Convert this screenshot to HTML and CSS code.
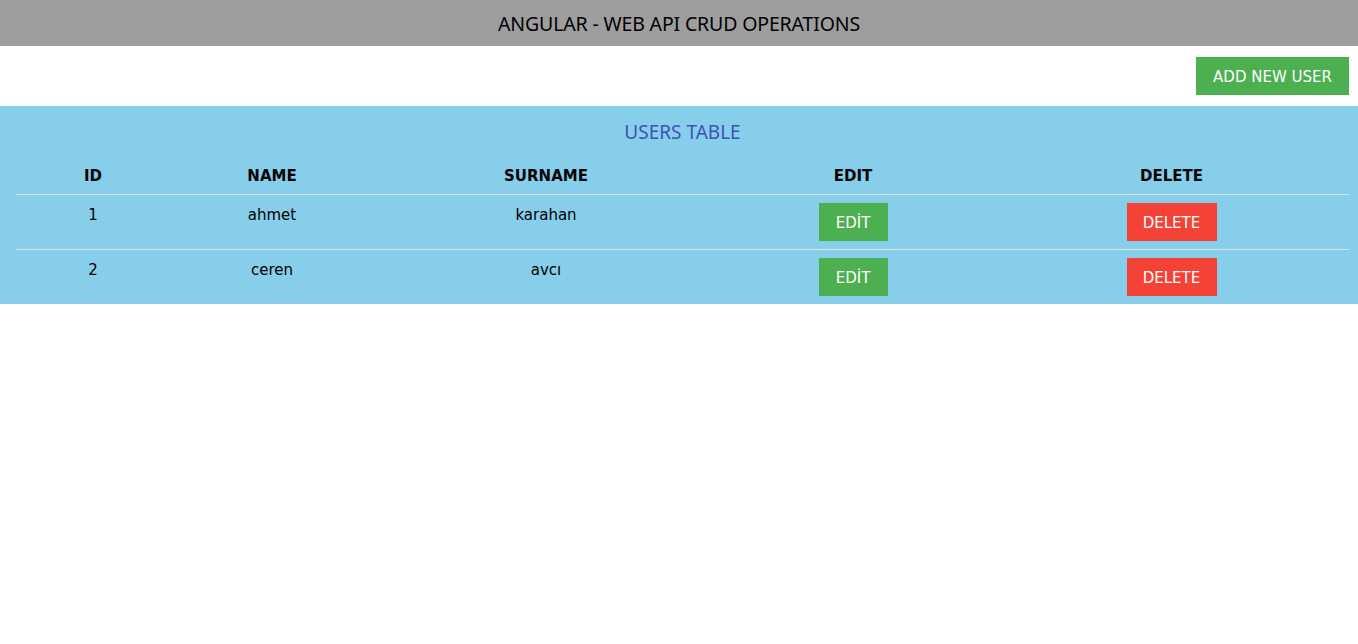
FILE: index.html
```html
<!DOCTYPE html>
<html>
<head>
<meta charset="utf-8">
<link rel="stylesheet" href="styles.css">
</head>
<body>
<header class="topbar">
  <h1 class="topbar-title">ANGULAR - WEB API CRUD OPERATIONS</h1>
</header>
<div class="actions">
  <button class="btn btn-green">ADD NEW USER</button>
</div>
<section class="panel">
  <h2 class="panel-title">USERS TABLE</h2>
  <table class="users">
    <colgroup>
      <col class="c-id"><col class="c-name"><col class="c-surname"><col class="c-edit"><col>
    </colgroup>
    <thead>
      <tr><th>ID</th><th>NAME</th><th>SURNAME</th><th>EDIT</th><th>DELETE</th></tr>
    </thead>
    <tbody>
      <tr>
        <td>1</td><td>ahmet</td><td>karahan</td>
        <td><button class="btn btn-green">EDİT</button></td>
        <td><button class="btn btn-red">DELETE</button></td>
      </tr>
      <tr>
        <td>2</td><td>ceren</td><td>avcı</td>
        <td><button class="btn btn-green">EDİT</button></td>
        <td><button class="btn btn-red">DELETE</button></td>
      </tr>
    </tbody>
  </table>
</section>
</body>
</html>
```
FILE: styles.css
```css
html, body {
  margin: 0;
  padding: 0;
  font-family: "DejaVu Sans", Verdana, sans-serif;
  font-size: 15px;
  line-height: 1.5;
  color: #000;
  background: #fff;
}

.topbar {
  background: #9e9e9e;
  height: 46px;
  display: flex;
  align-items: center;
  justify-content: center;
}

.topbar-title {
  margin: 0;
  font-family: "Noto Sans", "Open Sans", sans-serif;
  font-weight: 400;
  font-size: 19.5px;
  line-height: 1;
  letter-spacing: -0.15px;
  padding-top: 1px;
}

.actions {
  display: flex;
  justify-content: flex-end;
  padding: 11px 9px 11px 16px;
}

.btn {
  border: none;
  margin: 0;
  font-family: "DejaVu Sans", Verdana, sans-serif;
  font-size: 15px;
  line-height: 22px;
  height: 38px;
  padding: 8px 16px;
  color: #fff;
  cursor: pointer;
}

.btn-green { background: #4caf50; }
.btn-red { background: #f44336; }

.actions .btn { width: 153px; padding: 9px 0 7px; }
.users .btn { display: block; margin: 0 auto; padding: 9px 0 7px; }
.users .btn-green { width: 69px; }
.users .btn-red { width: 90px; }

.panel {
  background: #87ceeb;
  padding: 0 9px 0 16px;
  height: 198px;
}

.panel-title {
  margin: 0;
  box-sizing: border-box;
  height: 50px;
  padding-top: 2px;
  display: flex;
  align-items: center;
  justify-content: center;
  font-family: "Noto Sans", "Open Sans", sans-serif;
  font-weight: 400;
  font-size: 19px;
  color: #3f51b5;
}

.users {
  width: 100%;
  border-collapse: collapse;
  table-layout: fixed;
}

.c-id { width: 154px; }
.c-name { width: 204px; }
.c-surname { width: 344px; }
.c-edit { width: 270px; }

.users th, .users td {
  text-align: center;
  vertical-align: top;
  padding: 8px;
  border-bottom: 1px solid #ddd;
}

.users th {
  font-weight: bold;
  font-size: 15px;
  line-height: 22px;
  height: 22px;
  padding: 9px 8px 7px;
}

.users td {
  font-size: 15px;
  line-height: 24px;
  height: 38px;
}

.users th:last-child,
.users td:last-child {
  padding-left: 11px;
  padding-right: 5px;
}
```
